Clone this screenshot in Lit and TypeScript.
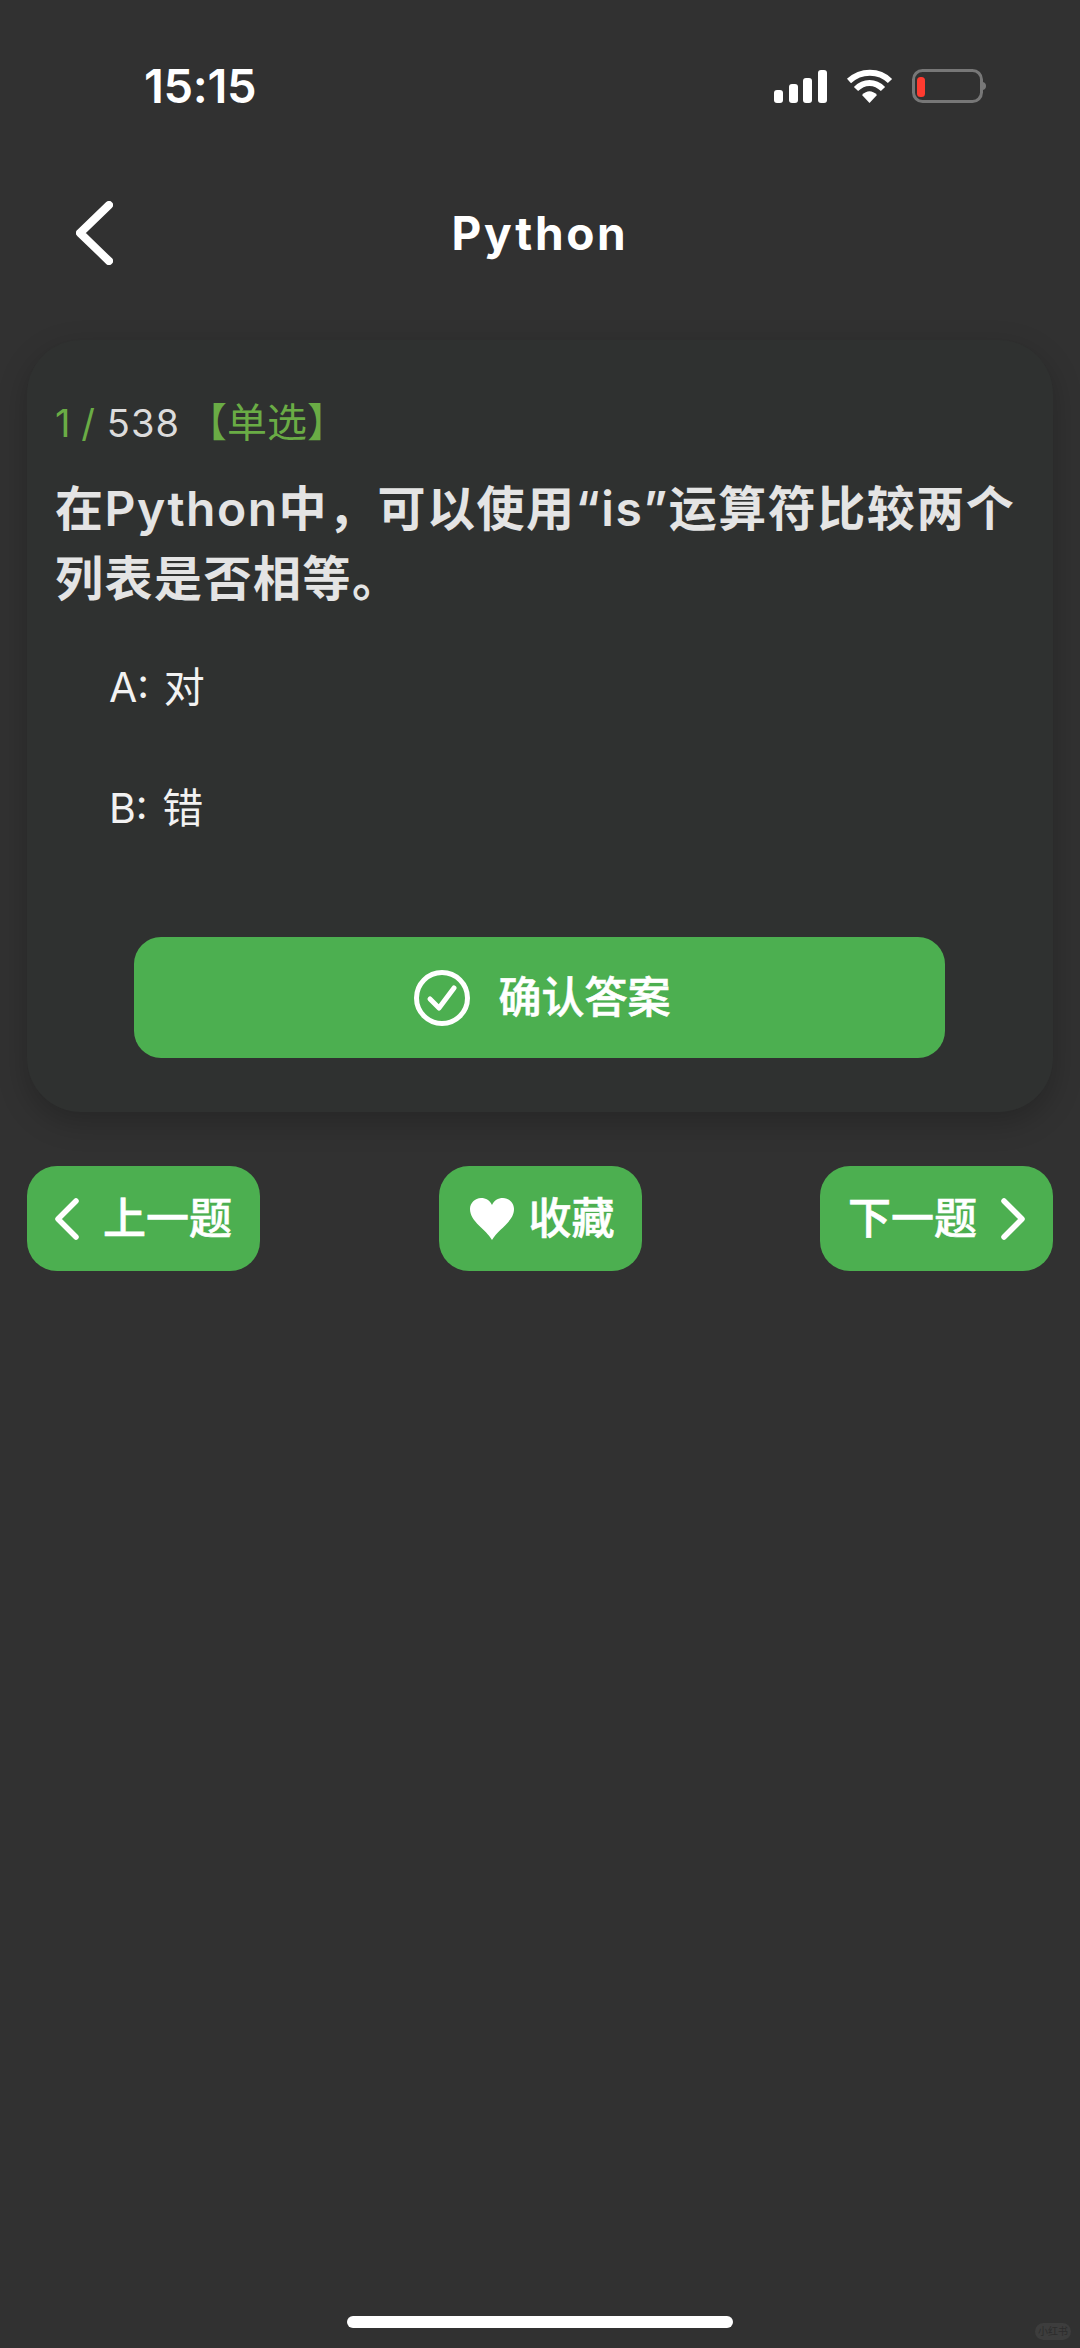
import { LitElement, html, css } from "lit";
import { customElement } from "lit/decorators.js";

@customElement("app-root")
export class AppRoot extends LitElement {
  static styles = css`
    :host { display: block; width: 1080px; height: 2348px; }
    * { box-sizing: border-box; }
    .page {
      position: relative; width: 1080px; height: 2348px; background: #313131; color: #fff;
      display: flex; flex-direction: column; overflow: hidden;
      font-family: Inter, "Noto Sans CJK SC", sans-serif;
    }
    .status { height: 172px; padding: 0 94px 2px 144px; display: flex; justify-content: space-between; align-items: center; }
    .status svg { display: block; margin-top: 2px; }
    .time { font-size: 47px; font-weight: 600; line-height: 1; letter-spacing: -0.3px; }
    .top { height: 122px; display: grid; grid-template-columns: 1fr auto 1fr; align-items: center; padding: 0 76px; }
    .top svg { display: block; }
    .title { font-size: 46px; font-weight: 700; letter-spacing: 2.7px; }
    .card {
      margin: 46px 27px 0; padding: 62px 27px 54px 28px; height: 772px; background: #2f3130; border-radius: 54px;
      box-shadow: 0 10px 30px rgba(0,0,0,.22); display: flex; flex-direction: column;
    }
    .meta { font-size: 38px; line-height: 42px; color: #6aac45; display: flex; }
    .meta .total { color: #dcdcdc; margin-left: 12px; letter-spacing: 1px; }
    .meta .kind { margin-left: 7px; font-size: 40px; }
    .question { margin-top: 30px; font-size: 48px; font-weight: 600; line-height: 70px; color: #e4e4e4; letter-spacing: 1.5px; }
    .opts { margin-top: 43px; padding-left: 54px; display: flex; flex-direction: column; }
    .opt { height: 121px; font-size: 41px; line-height: 60px; color: #f2f2f2; word-spacing: 3px; }
    .confirm {
      margin: auto 81px 0 79px; height: 121px; border-radius: 27px; background: #4caf50;
      display: flex; align-items: center; justify-content: center; gap: 29px; padding-left: 5px;
      font-size: 43px; font-weight: 500;
    }
    .label { padding-bottom: 7px; -webkit-text-stroke: 0.6px #fff; }
    .bar { margin: 54px 27px 0; display: flex; justify-content: space-between; }
    .btn {
      height: 105px; border-radius: 30px; background: #4caf50; display: flex; align-items: center;
      font-size: 43px; font-weight: 500;
    }
    .prev { width: 233px; padding-left: 27px; gap: 24px; }
    .fav { width: 203px; padding-left: 30px; gap: 14px; }
    .next { width: 233px; padding-left: 28px; gap: 24px; }
    .home { margin: auto auto 20px; width: 386px; height: 12px; border-radius: 6px; background: #fff; }
    .mark {
      position: absolute; left: 1035px; top: 2323px; width: 36px; height: 17px; border-radius: 9px; background: #3d3d3d;
      color: #2c2c2c; font-size: 10px; line-height: 17px; text-align: center;
    }
  `;

  private chevron(left: boolean) {
    return html`<svg width="25" height="42" viewBox="0 0 25 42" fill="none" stroke="#fff" stroke-width="5.500" stroke-linecap="round" stroke-linejoin="round">
      <path d=${left ? "M22 3 4 21l18 18" : "M3 3l18 18L3 39"}></path>
    </svg>`;
  }

  render() {
    return html`<div class="page">
      <div class="status">
        <span class="time">15:15</span>
        <svg width="212" height="34" viewBox="0 0 212 34" fill="#fff">
          <rect x="0" y="21" width="9" height="13" rx="3"></rect>
          <rect x="15" y="15" width="9" height="19" rx="3"></rect>
          <rect x="29" y="9" width="9" height="25" rx="3"></rect>
          <rect x="44" y="1" width="9" height="33" rx="3"></rect>
          <g fill="none" stroke="#fff" stroke-width="6">
            <path d="M75 12C87 1 105 1 116 12"></path>
            <path d="M82 20C90 12 101 12 109 20"></path>
          </g>
          <path d="M88 26c5-5 10-5 15 0l-7.500 8z"></path>
          <rect x="139.500" y="1.500" width="68" height="31" rx="9" fill="none" stroke="#777" stroke-width="3"></rect>
          <rect x="143" y="8" width="8" height="20" rx="3.500" fill="#ff3b30"></rect>
          <path d="M208 13c3 0 4 2 4 4s-1 4-4 4z" fill="#777"></path>
        </svg>
      </div>
      <div class="top">
        <svg width="37" height="64" viewBox="0 0 37 64" fill="none" stroke="#fff" stroke-width="8" stroke-linecap="round" stroke-linejoin="round">
          <path d="M33 4 4 32l29 28"></path>
        </svg>
        <span class="title">Python</span>
      </div>
      <div class="card">
        <div class="meta"><span>1 /</span><span class="total">538</span><span class="kind">【单选】</span></div>
        <div class="question">在Python中，可以使用“is”运算符比较两个列表是否相等。</div>
        <div class="opts">
          <div class="opt">A: 对</div>
          <div class="opt">B: 错</div>
        </div>
        <div class="confirm">
          <svg width="56" height="56" viewBox="0 0 56 56" fill="none" stroke="#fff" stroke-linecap="round" stroke-linejoin="round">
            <circle cx="28" cy="28" r="25.500" stroke-width="5"></circle>
            <path d="M16 29l9 9 15-20" stroke-width="5"></path>
          </svg>
          <span class="label">确认答案</span>
        </div>
      </div>
      <div class="bar">
        <div class="btn prev">${this.chevron(true)}<span class="label">上一题</span></div>
        <div class="btn fav">
          <svg width="46" height="42" viewBox="0 0 46 42" fill="#fff">
            <path d="M23 42C17 31 1 24 1 11 1 5 6 0 12 0c5 0 9 2.500 11 7 2-4.500 6-7 11-7 6 0 11 5 11 11 0 13-16 20-22 31z"></path>
          </svg>
          <span class="label">收藏</span>
        </div>
        <div class="btn next"><span class="label">下一题</span>${this.chevron(false)}</div>
      </div>
      <div class="home"></div>
      <div class="mark">小红书</div>
    </div>`;
  }
}
